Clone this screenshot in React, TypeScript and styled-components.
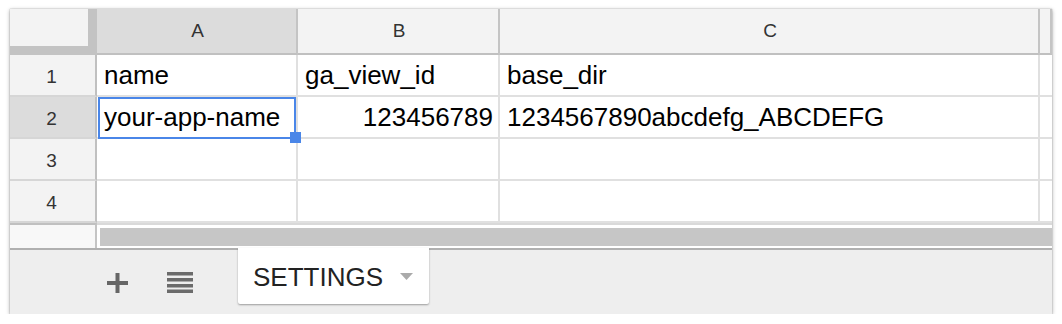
import React, { FC } from "react";
import styled, { createGlobalStyle } from "styled-components";

const GlobalStyle = createGlobalStyle`
  body {
    margin: 0;
    background: #ffffff;
    font-family: "Liberation Sans", Arial, sans-serif;
  }
`;

const Frame = styled.div`
  margin: 9px 0 0 10px;
  width: 1042px;
  height: 305px;
  box-shadow: 0 1px 4px rgba(0, 0, 0, 0.35), 0 0 1px rgba(0, 0, 0, 0.35);
  display: flex;
  flex-direction: column;
  overflow: hidden;
`;

const Grid = styled.div`
  display: grid;
  grid-template-columns: 87px 201px 202px 540px 12px;
  grid-template-rows: 46px repeat(4, 42px);
`;

const Corner = styled.div`
  box-sizing: border-box;
  background: #f3f3f3;
  border-right: 9px solid #c3c3c3;
  border-bottom: 9px solid #c3c3c3;
`;

const ColHeader = styled.div<{ $selected?: boolean }>`
  box-sizing: border-box;
  display: flex;
  align-items: center;
  justify-content: center;
  padding-left: 2px;
  background: ${(p) => (p.$selected ? "#dcdcdc" : "#f3f3f3")};
  border-right: 2px solid #c4c4c4;
  border-bottom: 2px solid #c0c0c0;
  font-size: 19px;
  color: #333333;
`;

const RowHeader = styled.div<{ $selected?: boolean }>`
  box-sizing: border-box;
  display: flex;
  align-items: center;
  justify-content: center;
  padding: 3px 2px 0 0;
  background: ${(p) => (p.$selected ? "#dcdcdc" : "#f3f3f3")};
  border-right: 2px solid #c0c0c0;
  border-bottom: 2px solid #d6d6d6;
  font-size: 19px;
  color: #333333;
`;

const Cell = styled.div<{ $align?: "left" | "right" }>`
  box-sizing: border-box;
  position: relative;
  display: flex;
  align-items: center;
  justify-content: ${(p) => (p.$align === "right" ? "flex-end" : "flex-start")};
  padding: 0 5px 0 7px;
  background: #ffffff;
  border-right: 2px solid #e0e0e0;
  border-bottom: 2px solid #e0e0e0;
  font-size: 26px;
  color: #000000;
  white-space: nowrap;
`;

const Selection = styled.div`
  position: absolute;
  z-index: 2;
  top: 0;
  left: 1px;
  right: 0;
  bottom: -2px;
  border: 2px solid #4a86e8;
  pointer-events: none;
`;

const Handle = styled.div`
  position: absolute;
  right: -7px;
  bottom: -6px;
  width: 11px;
  height: 11px;
  background: #4a86e8;
`;

const ScrollRow = styled.div`
  display: flex;
  height: 25px;
  border-top: 2px solid #d9d9d9;
  box-sizing: border-box;
`;

const ScrollGutter = styled.div`
  width: 87px;
  box-sizing: border-box;
  background: #f8f8f8;
  border-right: 2px solid #c4c4c4;
  margin-top: -2px;
  border-top: 2px solid #c0c0c0;
`;

const ScrollTrack = styled.div`
  flex: 1;
  background: #ffffff;
  padding: 3px 0 2px 3px;
  display: flex;
`;

const ScrollThumb = styled.div`
  flex: 1;
  background: #c6c6c6;
`;

const TabBar = styled.div`
  flex: 1;
  display: flex;
  align-items: flex-start;
  background: #eeeeee;
  border-top: 2px solid #b0b0b0;
`;

const IconButton = styled.div<{ $left: number; $top: number }>`
  margin-left: ${(p) => p.$left}px;
  margin-top: ${(p) => p.$top}px;
  display: flex;
`;

const Tab = styled.div`
  margin-left: 45px;
  margin-top: -2px;
  width: 191px;
  height: 56px;
  box-sizing: border-box;
  background: #ffffff;
  box-shadow: 0 1px 2px rgba(0, 0, 0, 0.35);
  border-radius: 0 0 2px 2px;
  display: flex;
  align-items: center;
  padding: 0 16px 0 15px;
  font-size: 26px;
  color: #222222;
`;

const TabLabel = styled.span`
  flex: 1;
  margin-top: 2px;
`;

const PlusIcon: FC = () => (
  <svg width="21" height="20" viewBox="0 0 21 20">
    <rect x="0" y="8" width="21" height="4" fill="#666666" />
    <rect x="8.5" y="0" width="4" height="20" fill="#666666" />
  </svg>
);

const ListIcon: FC = () => (
  <svg width="26" height="21" viewBox="0 0 26 21">
    {[0, 6, 12, 17.5].map((y) => (
      <rect key={y} x="0" y={y} width="26" height="3.5" fill="#6b6b6b" />
    ))}
  </svg>
);

const Caret: FC = () => (
  <svg width="13" height="7" viewBox="0 0 13 7">
    <path d="M0 0 L13 0 L6.5 7 Z" fill="#aaaaaa" />
  </svg>
);

type Row = { n: number; a: string; b: string; c: string };

const rows: Row[] = [
  { n: 1, a: "name", b: "ga_view_id", c: "base_dir" },
  { n: 2, a: "your-app-name", b: "123456789", c: "1234567890abcdefg_ABCDEFG" },
  { n: 3, a: "", b: "", c: "" },
  { n: 4, a: "", b: "", c: "" },
];

const App: FC = () => {
  return (
    <>
      <GlobalStyle />
      <Frame>
        <Grid>
          <Corner />
          <ColHeader $selected>A</ColHeader>
          <ColHeader>B</ColHeader>
          <ColHeader>C</ColHeader>
          <ColHeader />
          {rows.map((row) => (
            <React.Fragment key={row.n}>
              <RowHeader $selected={row.n === 2}>{row.n}</RowHeader>
              <Cell>
                {row.a}
                {row.n === 2 && (
                  <Selection>
                    <Handle />
                  </Selection>
                )}
              </Cell>
              <Cell $align={row.n === 2 ? "right" : "left"}>{row.b}</Cell>
              <Cell>{row.c}</Cell>
              <Cell />
            </React.Fragment>
          ))}
        </Grid>
        <ScrollRow>
          <ScrollGutter />
          <ScrollTrack>
            <ScrollThumb />
          </ScrollTrack>
        </ScrollRow>
        <TabBar>
          <IconButton $left={97} $top={23}>
            <PlusIcon />
          </IconButton>
          <IconButton $left={39} $top={22}>
            <ListIcon />
          </IconButton>
          <Tab>
            <TabLabel>SETTINGS</TabLabel>
            <Caret />
          </Tab>
        </TabBar>
      </Frame>
    </>
  );
};

export default App;
